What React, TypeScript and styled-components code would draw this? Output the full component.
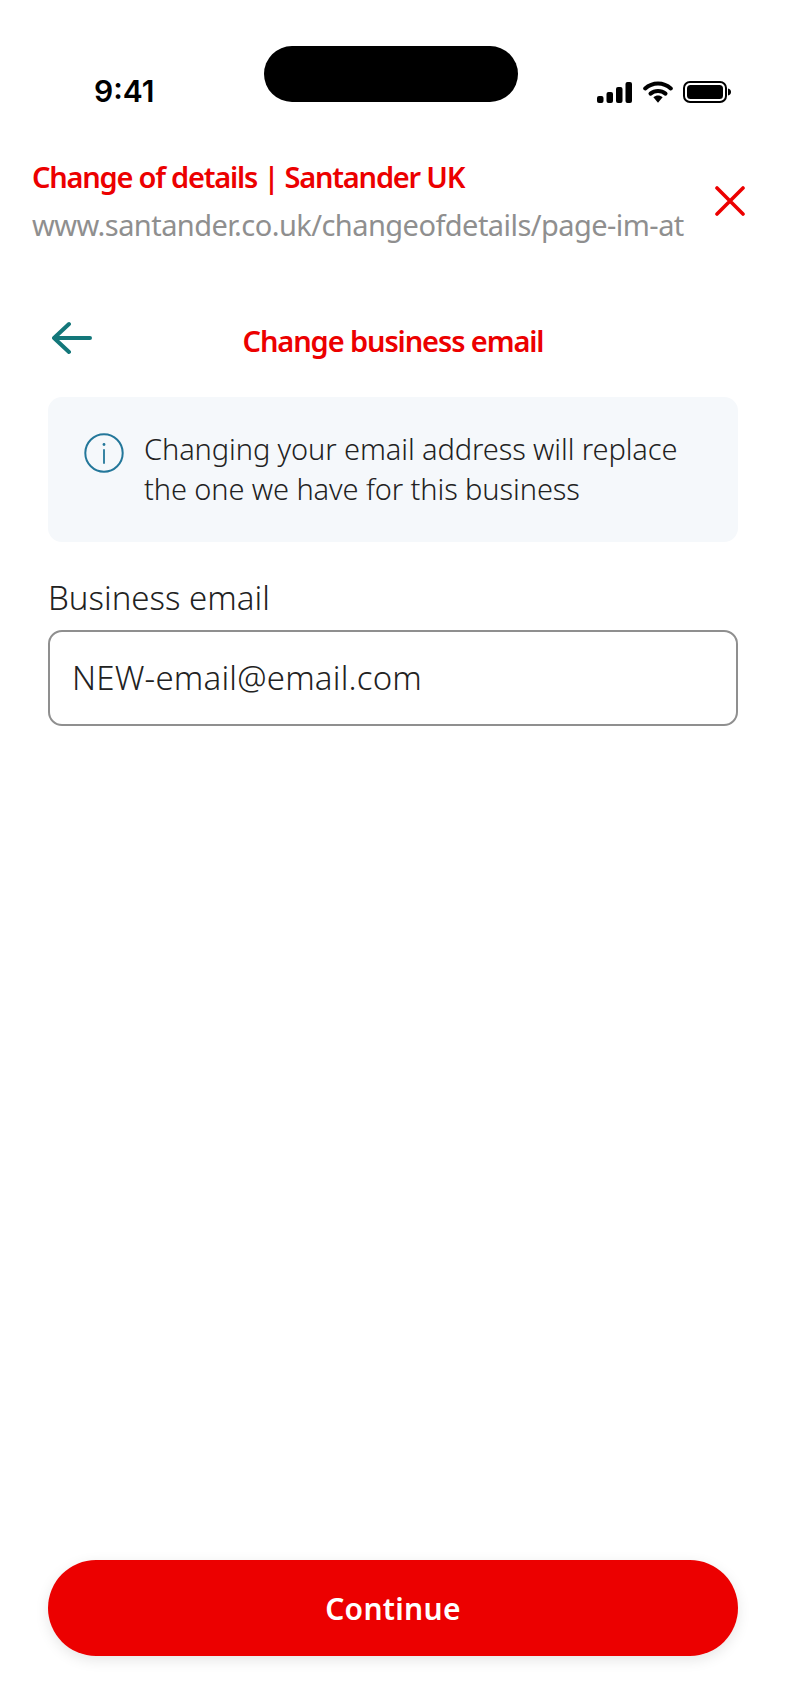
import React from 'react';
import styled, { createGlobalStyle } from 'styled-components';

const GlobalStyle = createGlobalStyle`
  html, body {
    margin: 0;
    padding: 0;
    background: #fff;
  }
  * {
    box-sizing: border-box;
  }
`;

const App = () => {
  return (
    <Page>
      <GlobalStyle />
      <StatusBar>
        <Time>9:41</Time>
        <Island />
        <StatusIcons>
          <svg width="35" height="21" viewBox="0 0 35 21">
            <rect x="0" y="14" width="6.5" height="7" rx="2" fill="#000" />
            <rect x="9.5" y="10" width="6.5" height="11" rx="2" fill="#000" />
            <rect x="19" y="5" width="6.5" height="16" rx="2" fill="#000" />
            <rect x="28.5" y="0" width="6.5" height="21" rx="2" fill="#000" />
          </svg>
          <svg width="30" height="22" viewBox="0 0 30 22">
            <path d="M2.2 7.5C9.5 0.8 20.5 0.8 27.8 7.5" fill="none" stroke="#000" strokeWidth="4" strokeLinecap="round" />
            <path d="M7.5 12.6C11.8 9 18.2 9 22.5 12.6" fill="none" stroke="#000" strokeWidth="4" strokeLinecap="round" />
            <path d="M10.4 16.2C13.2 13.8 16.8 13.8 19.6 16.2L15 21.8Z" fill="#000" />
          </svg>
          <svg width="48" height="22" viewBox="0 0 48 22">
            <rect x="1" y="1" width="42" height="20" rx="6" fill="none" stroke="#000" strokeWidth="2" />
            <rect x="4" y="4" width="36" height="14" rx="3.5" fill="#000" />
            <path d="M45 7.5C47 8 48 9.4 48 11C48 12.6 47 14 45 14.5Z" fill="#000" />
          </svg>
        </StatusIcons>
      </StatusBar>

      <BrowserBar>
        <BrowserText>
          <BrowserTitle>Change of details | Santander UK</BrowserTitle>
          <BrowserUrl>www.santander.co.uk/changeofdetails/page-im-at</BrowserUrl>
        </BrowserText>
        <CloseButton aria-label="Close">
          <svg width="30" height="30" viewBox="0 0 30 30">
            <path d="M2 2L28 28M28 2L2 28" fill="none" stroke="#ec0000" strokeWidth="3.6" strokeLinecap="round" />
          </svg>
        </CloseButton>
      </BrowserBar>

      <Content>
        <NavRow>
          <BackButton aria-label="Back">
            <svg width="40" height="34" viewBox="0 0 40 34">
              <path d="M38 17H3M17 3L2 17L17 31" fill="none" stroke="#13777a" strokeWidth="4" strokeLinecap="round" strokeLinejoin="round" />
            </svg>
          </BackButton>
          <NavTitle>Change business email</NavTitle>
        </NavRow>

        <InfoBox>
          <svg width="40" height="40" viewBox="0 0 40 40">
            <circle cx="20" cy="20" r="18.7" fill="none" stroke="#23779a" strokeWidth="2" />
            <circle cx="20" cy="11.5" r="1.4" fill="#23779a" />
            <path d="M20 17V30" fill="none" stroke="#23779a" strokeWidth="1.8" strokeLinecap="round" />
          </svg>
          <InfoText>
            Changing your email address will replace
            <br />
            the one we have for this business
          </InfoText>
        </InfoBox>

        <FieldLabel htmlFor="business-email">Business email</FieldLabel>
        <TextField id="business-email" defaultValue="NEW-email@email.com" />
      </Content>

      <Footer>
        <ContinueButton>Continue</ContinueButton>
      </Footer>
    </Page>
  );
};

const Page = styled.div`
  width: 786px;
  height: 1704px;
  display: flex;
  flex-direction: column;
  background: #fff;
  overflow: hidden;
  font-family: 'Noto Sans', 'Open Sans', sans-serif;
  color: #222;
`;

const StatusBar = styled.div`
  height: 102px;
  padding: 46px 55px 0 94px;
  display: flex;
  justify-content: space-between;
  align-items: flex-start;
`;

const Time = styled.span`
  width: 60px;
  margin-top: 26px;
  font-family: 'Inter', 'Liberation Sans', sans-serif;
  font-size: 30px;
  line-height: 38px;
  font-weight: 600;
  white-space: nowrap;
  color: #000;
`;

const Island = styled.div`
  width: 254px;
  height: 56px;
  margin-left: 30px;
  border-radius: 28px;
  background: #000;
`;

const StatusIcons = styled.div`
  width: 134px;
  margin-top: 35px;
  display: flex;
  align-items: flex-end;
  justify-content: space-between;

  svg {
    display: block;
  }
`;

const BrowserBar = styled.div`
  margin-top: 55px;
  padding: 0 41px 0 32px;
  display: flex;
  justify-content: space-between;
  align-items: center;
`;

const BrowserText = styled.div`
  display: flex;
  flex-direction: column;
  gap: 8px;
`;

const BrowserTitle = styled.div`
  font-size: 29px;
  line-height: 40px;
  font-weight: 600;
  letter-spacing: -1.22px;
  color: #ec0000;
`;

const BrowserUrl = styled.div`
  font-size: 29px;
  line-height: 40px;
  font-weight: 400;
  letter-spacing: -0.55px;
  color: #8f8f8f;
`;

const CloseButton = styled.button`
  padding: 0;
  border: 0;
  background: none;
  display: block;
  height: 30px;
`;

const Content = styled.div`
  padding: 0 48px;
  display: flex;
  flex-direction: column;
`;

const NavRow = styled.div`
  position: relative;
  height: 40px;
  margin-top: 75px;
  display: flex;
  justify-content: center;
  align-items: center;
`;

const BackButton = styled.button`
  position: absolute;
  left: 4px;
  top: 1px;
  padding: 0;
  border: 0;
  background: none;
  height: 34px;
`;

const NavTitle = styled.div`
  margin-top: 2px;
  font-size: 29px;
  line-height: 40px;
  font-weight: 600;
  letter-spacing: -1.1px;
  color: #ec0000;
`;

const InfoBox = styled.div`
  height: 145px;
  margin-top: 37px;
  padding: 32px 20px 0 36px;
  display: flex;
  gap: 20px;
  align-items: flex-start;
  border-radius: 14px;
  background: #f5f8fb;

  svg {
    flex: none;
    margin-top: 4px;
  }
`;

const InfoText = styled.div`
  font-size: 29px;
  line-height: 40px;
  font-weight: 300;
  letter-spacing: -0.1px;
  white-space: nowrap;
`;

const FieldLabel = styled.label`
  margin-top: 35px;
  font-size: 33px;
  line-height: 42px;
  font-weight: 300;
`;

const TextField = styled.input`
  width: 100%;
  height: 96px;
  margin-top: 11px;
  padding: 0 22px 2px;
  border: 2px solid #8f8f8f;
  border-radius: 14px;
  outline: none;
  background: #fff;
  font-family: inherit;
  font-size: 33px;
  font-weight: 300;
  letter-spacing: 0.2px;
  color: #222;
`;

const Footer = styled.div`
  margin-top: auto;
  padding: 0 48px 48px;
`;

const ContinueButton = styled.button`
  width: 100%;
  height: 96px;
  border: 0;
  border-radius: 48px;
  background: #ec0000;
  box-shadow: 0 4px 14px rgba(0, 0, 0, 0.1);
  color: #fff;
  font-family: 'Noto Sans', sans-serif;
  font-size: 30px;
  font-weight: 600;
  letter-spacing: 0.3px;
`;

export default App;
